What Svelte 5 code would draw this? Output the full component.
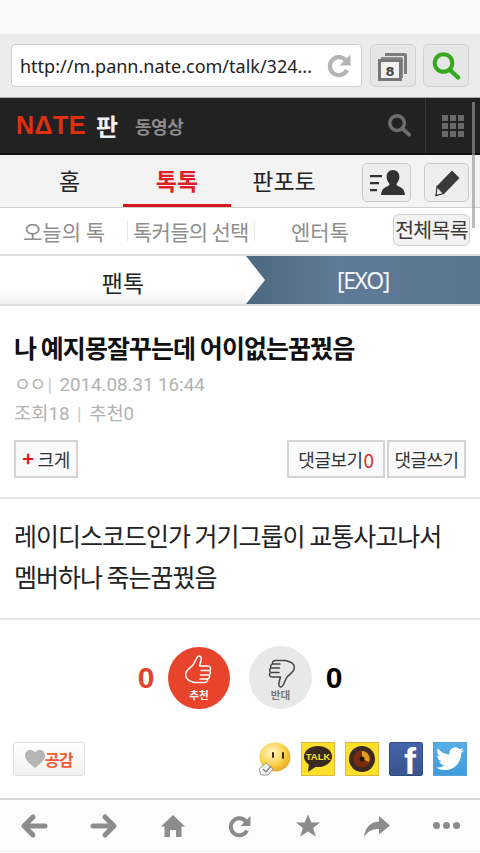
<script>
	let title = '나 예지몽잘꾸는데 어이없는꿈꿨음';
	let body = ['레이디스코드인가 거기그룹이 교통사고나서', '멤버하나 죽는꿈꿨음'];
</script>

<div class="page">
	<div class="status"></div>

	<div class="browser">
		<div class="url">
			<span class="url-text">http://m.pann.nate.com/talk/324...</span>
			<svg class="reload" width="26" height="26" viewBox="0 0 26 26">
				<path d="M21 17a9 9 0 1 1-1.500-10" fill="none" stroke="#b4b4b4" stroke-width="4.200" />
				<path d="M24.500 1.500v11H13.500z" fill="#b4b4b4" />
			</svg>
		</div>
		<button class="tool">
			<svg width="32" height="32" viewBox="0 0 32 32">
				<path d="M8 3h20a2 2 0 0 1 2 2v19h-3V6H8z" fill="#7c7c7c" />
				<path d="M4 7h20a2 2 0 0 1 2 2v19h-3V10H4z" fill="#8a8a8a" />
				<rect x="2.500" y="10.500" width="21" height="19" fill="#f2f2f2" stroke="#777" stroke-width="3" />
				<text x="13" y="26" text-anchor="middle" class="tab-count">8</text>
			</svg>
		</button>
		<button class="tool">
			<svg width="30" height="32" viewBox="0 0 30 32">
				<circle cx="12.500" cy="13" r="8.800" fill="none" stroke="#34a91c" stroke-width="4" />
				<path d="M19 20l8 7.500" stroke="#34a91c" stroke-width="4.400" stroke-linecap="round" />
			</svg>
		</button>
	</div>

	<header class="nate">
		<div class="brand">
			<span class="logo">NΔTE</span>
			<span class="pan">판</span>
			<span class="video">동영상</span>
		</div>
		<div class="nate-search">
			<svg width="25" height="25" viewBox="0 0 26 26">
				<circle cx="10.500" cy="10.500" r="7.600" fill="none" stroke="#6e6e6e" stroke-width="3.600" />
				<path d="M16 16l7 6.500" stroke="#6e6e6e" stroke-width="4" stroke-linecap="round" />
			</svg>
		</div>
		<div class="nate-grid">
			{#each Array(9) as _}
				<i></i>
			{/each}
		</div>
	</header>

	<nav class="tabs">
		<span class="tab home">홈</span>
		<span class="tab active">톡톡</span>
		<span class="tab pansee">판포토</span>
		<button class="tab-btn people">
			<svg width="36" height="28" viewBox="0 0 36 28">
				<path d="M1 6h12v2.200H1zM1 13h9v2.200H1zM1 20h7v2.200H1z" fill="#333" />
				<path d="M24 1c4 0 6.400 3 6.400 6.500 0 3-1.200 5.500-2.600 7-.6 1 0 2 1.500 2.700 3 1.300 6.200 2.500 6.700 8.800H12c.5-6.300 3.700-7.500 6.700-8.800 1.500-.7 2.100-1.700 1.500-2.700-1.400-1.500-2.600-4-2.600-7C17.600 4 20 1 24 1z" fill="#333" />
			</svg>
		</button>
		<button class="tab-btn pencil">
			<svg width="28" height="28" viewBox="0 0 28 28">
				<path d="M19 1.500l7.500 7.500-15 15.500-9 2.500 1.500-10z" fill="#3a3a3a" />
				<path d="M4 17.500l6.500 7-7.500 2.200z" fill="#e8e8e8" stroke="#3a3a3a" stroke-width="1.200" />
			</svg>
		</button>
	</nav>

	<nav class="subnav">
		<span class="sub first">오늘의 톡</span>
		<span class="sub second">톡커들의 선택</span>
		<span class="sub third">엔터톡</span>
		<span class="all">전체목록</span>
	</nav>

	<div class="crumbs">
		<div class="crumb-left">팬톡</div>
		<div class="crumb-right">[EXO]</div>
	</div>

	<section class="head">
		<h1>{title}</h1>
		<p class="meta"><span class="nick">ㅇㅇ</span><span class="bar">|</span> 2014.08.31 16:44</p>
		<p class="meta small">조회18 <span class="bar">|</span> 추천0</p>
		<div class="actions">
			<span class="btn bigger"><b>+</b> 크게</span>
			<span class="right">
				<span class="btn view">댓글보기<em>0</em></span>
				<span class="btn write">댓글쓰기</span>
			</span>
		</div>
	</section>

	<section class="body">
		{#each body as line}
			<p>{line}</p>
		{/each}
	</section>

	<section class="votes">
		<span class="count up">0</span>
		<div class="circle red">
			<svg width="30" height="33" viewBox="0 0 30 33" fill="none" stroke="#fff" stroke-width="1.500" stroke-linejoin="round" stroke-linecap="round">
				<path d="M15 1c2 0 2.500 2 2 4.500L15.500 11H24c2.500 0 3.500 3 1.500 4.500 1.500 1.500 1 4-.5 4.500 1 1.500.2 3.700-1.500 4 .5 2-1 3.500-3 3.500H11c-2 0-3-1-5-1.500C2.500 24 1 21 2 17.500 3 14.500 6 13 8.500 10.500 11 8 12.500 1 15 1z" />
				<path d="M17 15.500h8M16.500 20h8M16 24h7" />
			</svg>
			<span>추천</span>
		</div>
		<div class="circle grey">
			<svg width="30" height="33" viewBox="0 0 30 33" fill="none" stroke="#444" stroke-width="1.500" stroke-linejoin="round" stroke-linecap="round">
				<path d="M15 32c-2 0-2.500-2-2-4.500l1.500-5.500H6c-2.500 0-3.500-3-1.500-4.500-1.500-1.500-1-4 .5-4.500-1-1.500-.2-3.700 1.500-4-.5-2 1-3.500 3-3.500H19c2 0 3 1 5 1.500 3.500 1 5 4 4 7.500-1 3-4 4.500-6.500 7C19 24 17.500 32 15 32z" />
				<path d="M13 17.500H5M13.500 13h-8M14 9H7" />
			</svg>
			<span>반대</span>
		</div>
		<span class="count down">0</span>
	</section>

	<section class="share">
		<span class="like">
			<svg width="20" height="18" viewBox="0 0 20 18">
				<path d="M10 18C4 13 0 10 0 5.500 0 2 2.500 0 5.500 0 7.500 0 9 1 10 2.500 11 1 12.500 0 14.500 0 17.500 0 20 2 20 5.500 20 10 16 13 10 18z" fill="#b5b5b5" />
			</svg>공감
		</span>
		<div class="icons">
			<svg class="emoticon" width="33" height="34" viewBox="0 0 33 34">
				<defs>
					<radialGradient id="face" cx="0.4" cy="0.35" r="0.75">
						<stop offset="0" stop-color="#fff6c8" />
						<stop offset="0.55" stop-color="#fbd24c" />
						<stop offset="1" stop-color="#e29a12" />
					</radialGradient>
				</defs>
				<ellipse cx="17" cy="15" rx="15.500" ry="14.500" fill="url(#face)" />
				<path d="M15 11v4M25 11v5" stroke="#3b2a10" stroke-width="2" stroke-linecap="round" />
				<path d="M1 27l7-6 7 6-5 6H3z" fill="#f3f3f3" stroke="#999" />
				<path d="M5 27l3 3 5-6" fill="none" stroke="#888" stroke-width="1.500" />
			</svg>
			<span class="sq kakao">
				<svg width="30" height="28" viewBox="0 0 30 28">
					<ellipse cx="15" cy="11.500" rx="14" ry="10.500" fill="#3a2a1e" />
					<path d="M6 18l-1 9 9-6z" fill="#3a2a1e" />
					<text x="15" y="15" text-anchor="middle" class="talk">TALK</text>
				</svg>
			</span>
			<span class="sq kakao">
				<svg width="28" height="28" viewBox="0 0 28 28">
					<circle cx="14" cy="14" r="13" fill="#3c2a22" />
					<circle cx="14" cy="14" r="8.500" fill="#7a2c10" />
					<path d="M14 14V6a8 8 0 0 1 7 11z" fill="#e49a1e" />
					<circle cx="14" cy="14" r="2.500" fill="#25150e" />
				</svg>
			</span>
			<span class="sq fb"><span>f</span></span>
			<span class="sq tw">
				<svg width="28" height="24" viewBox="0 0 24 20">
					<path d="M24 2.400a9.800 9.800 0 0 1-2.800.8A4.900 4.900 0 0 0 23.300.5a9.800 9.800 0 0 1-3.100 1.200A4.900 4.900 0 0 0 11.800 6.200 14 14 0 0 1 1.700.9a4.900 4.900 0 0 0 1.500 6.600 4.900 4.900 0 0 1-2.200-.6 4.900 4.900 0 0 0 3.900 4.900 4.900 4.900 0 0 1-2.200.1 4.900 4.900 0 0 0 4.600 3.400A9.900 9.900 0 0 1 0 17.300 14 14 0 0 0 7.500 19.500c9.100 0 14.100-7.500 14.100-14v-.6A10 10 0 0 0 24 2.400z" fill="#fff" />
				</svg>
			</span>
		</div>
	</section>

	<footer class="bottom">
		<svg width="28" height="26" viewBox="0 0 28 26"><path d="M25 13H5M13 4l-9 9 9 9" fill="none" stroke="#8c8c8c" stroke-width="5" stroke-linecap="round" stroke-linejoin="round" /></svg>
		<svg width="28" height="26" viewBox="0 0 28 26"><path d="M3 13h20M15 4l9 9-9 9" fill="none" stroke="#8c8c8c" stroke-width="5" stroke-linecap="round" stroke-linejoin="round" /></svg>
		<svg width="26" height="26" viewBox="0 0 26 26"><path d="M13 2L1 13.500h3.500V24H10v-7h6v7h5.500V13.500H25z" fill="#8c8c8c" /></svg>
		<svg width="26" height="26" viewBox="0 0 26 26"><path d="M20 17.500a8.500 8.500 0 1 1-1-9" fill="none" stroke="#8c8c8c" stroke-width="4" /><path d="M23.500 3v10H13.500z" fill="#8c8c8c" /></svg>
		<svg width="26" height="26" viewBox="0 0 26 26"><path d="M13 1.500l3.500 8h8.500l-6.800 5.500 2.600 8.500L13 18.500l-7.800 5 2.600-8.500L1 9.500h8.500z" fill="#8c8c8c" /></svg>
		<svg width="28" height="26" viewBox="0 0 28 26"><path d="M16 3l11 9.500-11 9V16C9 16 5 18 1 24 2 15 7 9 16 8.500z" fill="#8c8c8c" /></svg>
		<div class="dots"><i></i><i></i><i></i></div>
	</footer>

	<div class="scrollbar"></div>
</div>

<style>
	:global(body) {
		margin: 0;
		background: #fff;
	}

	.page {
		position: relative;
		width: 480px;
		height: 853px;
		overflow: hidden;
		font-family: "Noto Sans CJK KR", "Liberation Sans", sans-serif;
		color: #222;
		background: #fff;
	}

	.status {
		height: 34px;
		background: #f9f9f9;
	}

	.browser {
		height: 63px;
		box-sizing: border-box;
		display: flex;
		align-items: flex-start;
		padding: 10px 0 0 11px;
		background: #ececec;
	}

	.url {
		flex: none;
		width: 351px;
		height: 43px;
		box-sizing: border-box;
		display: flex;
		align-items: center;
		justify-content: space-between;
		padding: 0 9px 0 8px;
		background: #fff;
		border: 1px solid #d0d0d0;
		border-radius: 4px;
		margin-right: 8px;
	}

	.url-text {
		font-family: "Noto Sans", sans-serif;
		font-size: 18px;
		color: #222;
		white-space: nowrap;
	}

	.reload {
		flex: none;
	}

	.tool {
		flex: none;
		width: 46px;
		height: 43px;
		padding: 0;
		margin-right: 7px;
		display: flex;
		align-items: center;
		justify-content: center;
		background: #e6e6e6;
		border: 1px solid #d2d2d2;
		border-radius: 5px;
	}

	.tab-count {
		font-family: "DejaVu Sans", sans-serif;
		font-size: 13px;
		font-weight: 700;
		fill: #444;
	}

	.nate {
		height: 58px;
		box-sizing: border-box;
		display: flex;
		align-items: stretch;
		background: #222;
		border-top: 1px solid #aaa;
		border-bottom: 2px solid #111;
	}

	.brand {
		flex: 1;
		display: flex;
		align-items: center;
		padding-left: 16px;
	}

	.logo {
		font-family: "Liberation Sans", sans-serif;
		font-size: 25px;
		font-weight: 700;
		color: #e0300f;
		letter-spacing: 0.500px;
	}

	.pan {
		margin-left: 10px;
		font-size: 24px;
		font-weight: 700;
		line-height: 1;
		color: #f2f2f2;
	}

	.video {
		margin-left: 17px;
		font-size: 18px;
		font-weight: 700;
		line-height: 1;
		color: #8b8b8b;
		letter-spacing: -0.500px;
	}

	.nate-search {
		width: 38px;
		display: flex;
		align-items: center;
	}

	.nate-grid {
		width: 55px;
		box-sizing: border-box;
		border-left: 1px solid #383838;
		display: grid;
		grid-template-columns: repeat(3, 6px);
		grid-auto-rows: 6px;
		gap: 2px;
		align-content: center;
		justify-content: center;
	}

	.nate-grid i {
		background: #6a6a6a;
	}

	.tabs {
		height: 53px;
		box-sizing: border-box;
		display: flex;
		align-items: center;
		background: #f3f3f3;
		border-bottom: 1px solid #cfcfcf;
		padding-left: 28px;
	}

	.tab {
		font-size: 23px;
		line-height: 50px;
		height: 52px;
		text-align: center;
		box-sizing: border-box;
		color: #222;
	}

	.home {
		width: 83px;
		margin-right: 12px;
	}

	.active {
		width: 108px;
		color: #de1f26;
		font-weight: 700;
		border-bottom: 3px solid #d8161d;
	}

	.pansee {
		width: 106px;
		margin-right: 25px;
	}

	.tab-btn {
		flex: none;
		height: 39px;
		padding: 0;
		margin-top: 3px;
		display: flex;
		align-items: center;
		justify-content: center;
		background: #eeeeee;
		border: 1px solid #c9c9c9;
		border-radius: 5px;
	}

	.people {
		width: 49px;
		margin-right: 13px;
	}

	.pencil {
		width: 45px;
	}

	.subnav {
		height: 48px;
		box-sizing: border-box;
		display: flex;
		align-items: center;
		background: #fff;
		border-bottom: 2px solid #dcdcdc;
	}

	.sub {
		font-size: 21px;
		line-height: 46px;
		color: #8f8f8f;
		white-space: nowrap;
	}

	.first {
		width: 127px;
		padding-left: 23px;
		box-sizing: border-box;
	}

	.second {
		width: 128px;
		padding-left: 5px;
		box-sizing: border-box;
		border-left: 1px solid #e6e6e6;
		border-right: 1px solid #e6e6e6;
		line-height: 20px;
		letter-spacing: -0.700px;
	}

	.third {
		width: 138px;
		padding-left: 36px;
		box-sizing: border-box;
	}

	.all {
		width: 77px;
		height: 32px;
		box-sizing: border-box;
		margin-top: -2px;
		font-size: 20.500px;
		line-height: 29px;
		text-align: center;
		white-space: nowrap;
		color: #3a3a3a;
		background: #f2f2f2;
		border: 1px solid #cfcfcf;
		border-radius: 6px;
		letter-spacing: -0.700px;
	}

	.crumbs {
		height: 50px;
		box-sizing: border-box;
		display: flex;
		background: #fff;
		border-bottom: 2px solid #dcdcdc;
	}

	.crumb-left {
		width: 246px;
		font-size: 23px;
		line-height: 52px;
		text-align: center;
		color: #222;
		background: linear-gradient(#fff 70%, #f0f0f0);
	}

	.crumb-right {
		flex: 1;
		clip-path: polygon(0 0, 100% 0, 100% 100%, 0 100%, 19px 50%);
		font-family: "Noto Sans", sans-serif;
		font-size: 23px;
		line-height: 48px;
		text-align: center;
		letter-spacing: -1.400px;
		color: #f2f5f8;
		background: linear-gradient(90deg, #4f6880, #5f7a96 40%, #5a7691);
	}

	.head {
		height: 193px;
		box-sizing: border-box;
		padding: 23px 14px 0 14px;
		border-bottom: 2px solid #e2e2e2;
	}

	h1 {
		margin: 0;
		font-size: 25px;
		font-weight: 700;
		line-height: 36px;
		letter-spacing: -0.950px;
		color: #111;
		white-space: nowrap;
	}

	.meta {
		margin: 7px 0 0;
		font-size: 18.700px;
		line-height: 26px;
		color: #b2b2b2;
		font-family: "Roboto", "Noto Sans CJK KR", sans-serif;
	}

	.meta.small {
		margin-top: 3px;
	}

	.nick {
		letter-spacing: -2px;
	}

	.bar {
		color: #c8c8c8;
		margin: 0 3px;
	}

	.actions {
		display: flex;
		justify-content: space-between;
		margin-top: 13px;
	}

	.right {
		display: flex;
		gap: 2px;
	}

	.btn {
		height: 38px;
		box-sizing: border-box;
		display: flex;
		align-items: center;
		justify-content: center;
		font-size: 18px;
		color: #333;
		letter-spacing: -0.500px;
		background: #fafafa;
		border: 2px solid #d4d4d4;
		white-space: nowrap;
	}

	.bigger {
		width: 64px;
		gap: 4px;
	}

	.view {
		width: 98px;
	}

	.write {
		width: 79px;
	}

	.bigger b {
		color: #e8141c;
		font-size: 20px;
		line-height: 1;
		margin-top: -3px;
	}

	.btn em {
		font-style: normal;
		margin-left: 1px;
		color: #e0281e;
		font-size: 19px;
	}

	.body {
		height: 121px;
		box-sizing: border-box;
		padding: 16px 14px 0 14px;
		border-bottom: 2px solid #e2e2e2;
	}

	.body p {
		margin: 0;
		font-size: 25px;
		line-height: 41px;
		letter-spacing: -1px;
		color: #222;
		white-space: nowrap;
	}

	.votes {
		height: 106px;
		box-sizing: border-box;
		display: flex;
		align-items: center;
		justify-content: center;
		padding-top: 9px;
	}

	.count {
		font-family: "Liberation Sans", sans-serif;
		font-size: 30px;
		font-weight: 700;
		width: 24px;
		text-align: center;
	}

	.up {
		color: #e8412a;
		margin-right: 10px;
	}

	.down {
		color: #000;
		margin-left: 10px;
	}

	.circle {
		width: 62px;
		height: 62px;
		border-radius: 50%;
		display: flex;
		flex-direction: column;
		align-items: center;
		justify-content: center;
		box-sizing: border-box;
	}

	.circle span {
		font-size: 10.500px;
		line-height: 12px;
		font-weight: 700;
	}

	.circle svg {
		margin-bottom: 1px;
	}

	.red {
		background: #e8432b;
		color: #fff;
		margin-right: 19px;
	}

	.grey {
		background: #e8e8e8;
		color: #777;
		width: 63px;
		height: 63px;
	}

	.share {
		height: 74px;
		box-sizing: border-box;
		display: flex;
		align-items: flex-start;
		justify-content: space-between;
		padding: 16px 13px 0 13px;
		border-bottom: 2px solid #d9d9d9;
	}

	.like {
		width: 72px;
		height: 34px;
		box-sizing: border-box;
		display: flex;
		align-items: center;
		justify-content: center;
		font-size: 16px;
		font-weight: 700;
		color: #ef5a32;
		background: linear-gradient(#fff, #f2f2f2);
		border: 1px solid #dedede;
		border-radius: 3px;
		letter-spacing: -0.500px;
	}

	.icons {
		display: flex;
		align-items: center;
		gap: 10px;
		height: 34px;
	}

	.emoticon {
		margin-right: 0;
	}

	.sq {
		width: 34px;
		height: 34px;
		box-sizing: border-box;
		display: flex;
		align-items: center;
		justify-content: center;
	}

	.kakao {
		background: #fde02a;
		border: 1px solid #dcb942;
	}

	.talk {
		font-family: "Liberation Sans", sans-serif;
		font-size: 9.500px;
		font-weight: 700;
		fill: #fde02a;
	}

	.fb {
		background: linear-gradient(#4364a8, #37558f);
		border: 1px solid #2e4a80;
		border-radius: 2px;
		align-items: flex-end;
		justify-content: flex-end;
	}

	.fb span {
		font-family: "Liberation Sans", sans-serif;
		font-size: 36px;
		font-weight: 700;
		line-height: 32px;
		color: #fff;
		margin-right: 6px;
		margin-bottom: -3px;
	}

	.tw {
		background: linear-gradient(#57ade8, #3f9bdc);
		border: 1px solid #55a2d8;
	}

	.bottom {
		height: 52px;
		box-sizing: border-box;
		display: flex;
		align-items: center;
		justify-content: space-between;
		padding: 0 20px;
		background: #fcfcfc;
		border-bottom: 1px solid #ececec;
	}

	.dots {
		display: flex;
		gap: 3px;
	}

	.dots i {
		width: 7px;
		height: 7px;
		border-radius: 50%;
		background: #8c8c8c;
	}

	.scrollbar {
		position: absolute;
		left: 472px;
		top: 102px;
		width: 3px;
		height: 126px;
		background: rgba(150, 150, 150, 0.65);
	}
</style>
